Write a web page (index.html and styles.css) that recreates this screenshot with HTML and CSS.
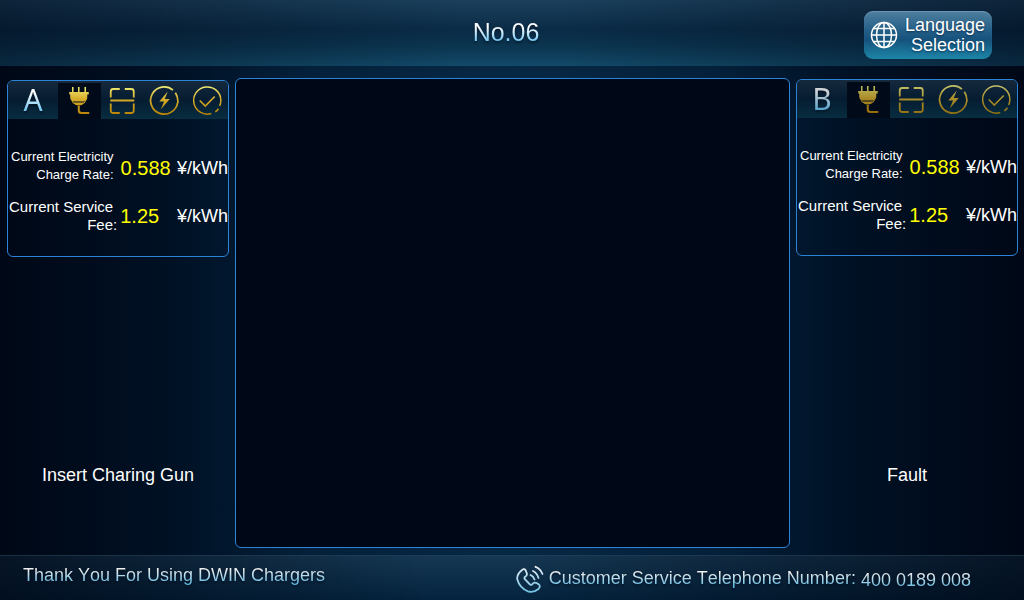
FILE: index.html
```html
<!DOCTYPE html>
<html lang="en">
<head>
<meta charset="utf-8">
<meta name="viewport" content="width=device-width, initial-scale=1">
<title>Charging Station No.06</title>
<link rel="stylesheet" href="styles.css">
</head>
<body>
<svg class="defs" aria-hidden="true">
  <defs>
    <linearGradient id="gold" gradientUnits="userSpaceOnUse" x1="0" y1="5" x2="0" y2="34">
      <stop offset="0" stop-color="#f0ee78"/>
      <stop offset="0.45" stop-color="#d6ad2c"/>
      <stop offset="1" stop-color="#b98306"/>
    </linearGradient>
    <linearGradient id="ice" gradientUnits="userSpaceOnUse" x1="0" y1="0" x2="0" y2="28">
      <stop offset="0" stop-color="#f0f2f4"/>
      <stop offset="1" stop-color="#6cbfe2"/>
    </linearGradient>
    <symbol id="plug" viewBox="0 0 42 38">
      <path d="M14.500 6v6M20.500 6v6M27 6v6" fill="none" stroke="url(#gold)" stroke-width="1.600"/>
      <path d="M11 11h19.500v2.500h-1.500v3.500q0 2-2 3l-1 .5h-11l-1-.5q-2-1-2-3v-3.500h-1z" fill="url(#gold)"/>
      <path d="M15 22q2 2.500 5.500 2.500t5.500-2.500zM19.500 24h2v5q0 2 2 2h7.500v2h-8q-3.500 0-3.500-3.500z" fill="url(#gold)"/>
      <path d="M13.500 19.500l1.500 2.500h11l1.500-2.500" fill="none" stroke="url(#gold)" stroke-width="1"/>
    </symbol>
    <symbol id="scan" viewBox="0 0 42 38">
      <path d="M9.500 16.500V10.500q0-2.500 2.500-2.500h6.500M23.500 8h6.500q2.500 0 2.500 2.500V16.500M9.500 22.500v7q0 2.500 2.500 2.500h6.500M23.500 32h6.500q2.500 0 2.500-2.500V22.500M9 19.500h24" fill="none" stroke="url(#gold)" stroke-width="1.800"/>
    </symbol>
    <symbol id="bolt" viewBox="0 0 42 38">
      <path d="M29.700 9.100A13.600 13.600 0 1 0 34.400 21.500M32.100 11.700q2.500 3.600 2.500 8.300v2" fill="none" stroke="url(#gold)" stroke-width="1.700"/>
      <path d="M24.500 10.500l-8.500 10h4.800l-3.300 8 9-10.500h-5z" fill="url(#gold)"/>
    </symbol>
    <symbol id="check" viewBox="0 0 42 38">
      <path d="M25 32.500A13.600 13.600 0 1 1 34.600 19.500q0 3-1.200 5.500M32.200 27.700q-1.400 2-3.200 3.200" fill="none" stroke="url(#gold)" stroke-width="1.500"/>
      <path d="M13.500 19.500l5.500 5.500 9.500-9.500" fill="none" stroke="url(#gold)" stroke-width="1.600"/>
    </symbol>
  </defs>
</svg>

<header class="topbar">
  <h1 class="title icy">No.06</h1>
  <button class="language" type="button">
    <svg class="globe" viewBox="0 0 28 28" aria-hidden="true">
      <g fill="none" stroke="#fff" stroke-width="1.500">
        <circle cx="14" cy="14" r="12.500"/>
        <ellipse cx="14" cy="14" rx="7.500" ry="12.500"/>
        <path d="M14 1.500v25M1.500 14h25M3.500 7.500h21M3.500 20.500h21"/>
      </g>
    </svg>
    <span class="language-text">Language<br>Selection</span>
  </button>
</header>

<main class="stations">
  <section class="station" aria-label="Connector A">
    <div class="card">
      <div class="steps">
        <h2 class="letter icy">A</h2>
        <svg class="step step-active" viewBox="0 0 42 38" aria-hidden="true"><use href="#plug"/></svg>
        <svg class="step" viewBox="0 0 42 38" aria-hidden="true"><use href="#scan"/></svg>
        <svg class="step" viewBox="0 0 42 38" aria-hidden="true"><use href="#bolt"/></svg>
        <svg class="step" viewBox="0 0 42 38" aria-hidden="true"><use href="#check"/></svg>
      </div>
      <dl class="rates">
        <div class="rate rate-energy">
          <dt>Current Electricity<br>Charge Rate:</dt>
          <dd class="amount">0.588</dd>
          <dd class="unit">¥/kWh</dd>
        </div>
        <div class="rate rate-service">
          <dt><span class="first">Current Service</span><br>Fee:</dt>
          <dd class="amount">1.25</dd>
          <dd class="unit">¥/kWh</dd>
        </div>
      </dl>
    </div>
    <p class="status">Insert Charing Gun</p>
  </section>

  <section class="display" aria-label="Display"></section>

  <section class="station station-dim" aria-label="Connector B">
    <div class="card">
      <div class="steps">
        <h2 class="letter icy">B</h2>
        <svg class="step step-active" viewBox="0 0 42 38" aria-hidden="true"><use href="#plug"/></svg>
        <svg class="step" viewBox="0 0 42 38" aria-hidden="true"><use href="#scan"/></svg>
        <svg class="step" viewBox="0 0 42 38" aria-hidden="true"><use href="#bolt"/></svg>
        <svg class="step" viewBox="0 0 42 38" aria-hidden="true"><use href="#check"/></svg>
      </div>
      <dl class="rates">
        <div class="rate rate-energy">
          <dt>Current Electricity<br>Charge Rate:</dt>
          <dd class="amount">0.588</dd>
          <dd class="unit">¥/kWh</dd>
        </div>
        <div class="rate rate-service">
          <dt><span class="first">Current Service</span><br>Fee:</dt>
          <dd class="amount">1.25</dd>
          <dd class="unit">¥/kWh</dd>
        </div>
      </dl>
    </div>
    <p class="status">Fault</p>
  </section>
</main>

<footer class="bottombar">
  <p class="thanks icy">Thank You For Using DWIN Chargers</p>
  <div class="contact">
    <svg class="phone" viewBox="0 0 28 28" aria-hidden="true">
      <g fill="none" stroke="url(#ice)" stroke-width="1.800" stroke-linecap="round" stroke-linejoin="round">
        <path d="M5.500 5.500Q1 9 1.200 14Q3.500 23 12 26.300Q17.500 28 22.500 24Q24.800 21.500 23 19.500L20 17.800Q17.800 17 16.500 19Q15.500 20.500 14 19.500L8.800 14.200Q7.800 12.800 9.200 11.700Q11.500 10.500 10.800 8.300L9.500 5Q8 3.200 5.500 5.500Z"/>
        <path d="M14.500 10q2.800 1 4 4.500M17 6q4 2 5.500 7M19.500 1.800q5 2 7 7.200"/>
      </g>
    </svg>
    <span class="icy">Customer Service Telephone Number:</span>
    <span class="icy number">400 0189 008</span>
  </div>
</footer>
</body>
</html>
```
FILE: styles.css
```css
* {
  box-sizing: border-box;
}

body {
  margin: 0;
  min-height: 100vh;
  display: flex;
  flex-direction: column;
  font: 18px/20px "Liberation Sans", Arial, sans-serif;
  font-kerning: none;
  color: #fff;
  background: linear-gradient(90deg, #000817 0%, #000b1b 7%, #001226 18%, #04203a 30%, #072844 50%, #04203a 70%, #001226 82%, #000b1b 93%, #000817 100%);
}

h1, h2, p, dl, dd {
  margin: 0;
  font-weight: 400;
}

.defs {
  position: absolute;
  width: 0;
  height: 0;
}

.icy {
  color: transparent;
  background: linear-gradient(#fff 30%, #58bdf0 85%);
  background-clip: text;
  -webkit-background-clip: text;
  filter: drop-shadow(0 2px 1px rgba(0, 6, 20, 0.5));
}

.topbar {
  display: grid;
  grid-template-columns: 1fr auto 1fr;
  align-items: center;
  min-height: 66px;
  padding: 0 32px 0 20px;
  background:
    linear-gradient(90deg, rgba(0, 8, 23, 0.5), rgba(0, 8, 23, 0) 45%, rgba(0, 8, 23, 0) 55%, rgba(0, 8, 23, 0.5)),
    linear-gradient(#1b405c, #0a2b46 45%, #0b3550 70%, #124a69);
}

.title {
  grid-column: 2;
  font-size: 25px;
  line-height: 28px;
  padding-bottom: 2px;
}

.language {
  justify-self: end;
  display: flex;
  align-items: center;
  gap: 7px;
  height: 48px;
  margin-top: 4px;
  padding: 0 7px 0 6px;
  border: 0;
  border-radius: 9px;
  font: inherit;
  color: #fff;
  background: linear-gradient(#4f7f9f, #245f87 40%, #15527c 60%, #1d86a8);
  box-shadow: inset 0 1px 1px rgba(150, 190, 210, 0.4);
}

.globe {
  width: 28px;
  height: 28px;
}

.language-text {
  text-align: right;
  text-shadow: 0 1px 2px rgba(0, 20, 50, 0.6);
}

.stations {
  flex: 1;
  display: grid;
  grid-template-columns: minmax(0, 2fr) minmax(0, 5fr) minmax(0, 2fr);
  gap: 6px;
  padding: 12px 6px 7px 7px;
}

.station {
  display: flex;
  flex-direction: column;
  padding-top: 2px;
}

.station-dim {
  padding-top: 1px;
}

.card,
.display {
  border: 1px solid #2c84d8;
  border-radius: 6px;
}

.card {
  padding-bottom: 22px;
}

.display {
  background: #000817;
}

.steps {
  display: grid;
  grid-template-columns: 50px repeat(4, minmax(0, 1fr));
  height: 38px;
  border-radius: 5px 5px 0 0;
  background: linear-gradient(#16293d, #051c31 50%, #082d40);
}

.letter {
  font: 30px/38px "Noto Sans", sans-serif;
  text-align: center;
}

.step {
  width: 100%;
  height: 38px;
}

.step-active {
  background: linear-gradient(transparent 2px, #000a19 2px);
}

.station-dim .letter,
.station-dim use {
  opacity: 0.8;
}

.rates {
  display: flex;
  flex-direction: column;
  gap: 14px;
  padding-top: 29px;
}

.rate {
  display: flex;
  align-items: center;
  white-space: nowrap;
  line-height: 18px;
}

.rate dt {
  text-align: right;
}

.rate-energy {
  padding-left: 3px;
  font-size: 13px;
}

.rate-energy dd {
  padding-top: 3px;
}

.rate-energy .amount {
  margin-left: 7px;
}

.rate-service {
  padding-left: 1px;
  font-size: 15px;
}

.rate-service .amount {
  margin-left: 3px;
}

.first {
  padding-right: 4px;
}

.amount {
  font-size: 20px;
  color: #ff0;
}

.rate .unit {
  margin-left: auto;
  font-size: 18px;
}

.status {
  margin: auto 0 63px;
  text-align: center;
}

.bottombar {
  display: flex;
  justify-content: space-between;
  min-height: 45px;
  padding: 9px 53px 0 23px;
  border-top: 1px solid rgba(90, 120, 145, 0.3);
  background:
    linear-gradient(90deg, rgba(0, 6, 18, 0.7), rgba(0, 6, 18, 0) 42%, rgba(0, 6, 18, 0) 50%, rgba(0, 6, 18, 0.7)),
    linear-gradient(#163853, #04233e);
}

.bottombar .icy {
  height: 22px;
  background-image: linear-gradient(#f0f0f0 20%, #5cb8e2 85%);
}

.contact {
  display: flex;
  gap: 5px;
  padding-top: 3px;
}

.phone {
  width: 28px;
  height: 28px;
  margin-top: -3px;
}

.contact .number {
  padding-top: 2px;
  height: 24px;
}
```
